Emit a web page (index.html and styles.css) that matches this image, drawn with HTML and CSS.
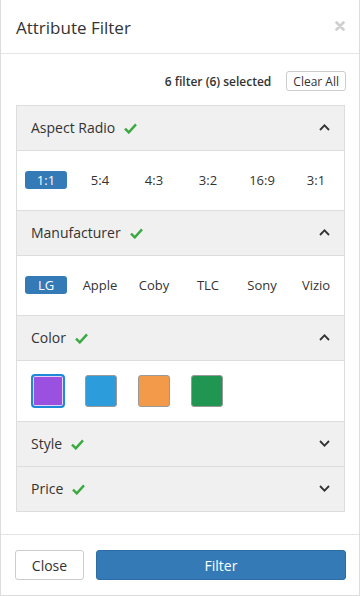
FILE: index.html
```html
<!DOCTYPE html>
<html lang="en">
<head>
    <meta charset="UTF-8">
    <meta name="viewport" content="width=device-width, initial-scale=1.0">
    <title>Attribute Filter</title>
    <link rel="stylesheet" href="styles.css">
</head>
<body>
    <div class="modal">
        <div class="modal-header">
            <h4 class="modal-title">Attribute Filter</h4>
            <button class="close" type="button" aria-label="Close">
                <svg width="10" height="10" viewBox="0 0 10 10"><path d="M1.5 1.5 L8.5 8.5 M8.5 1.5 L1.5 8.5" stroke="#cfcfcf" stroke-width="2.6" stroke-linecap="round"/></svg>
            </button>
        </div>

        <div class="modal-body">
            <div class="filter-summary">
                <strong>6 filter (6) selected</strong>
                <button class="btn-clear" type="button">Clear All</button>
            </div>

            <div class="panel-group">
                <!-- Aspect ratio -->
                <div class="panel">
                    <div class="panel-heading">
                        <span class="panel-title">Aspect Radio</span>
                        <svg class="check" width="13" height="11" viewBox="0 0 13 11"><path d="M1 5.6 L4.8 9.4 L12 1.4" fill="none" stroke="#3aaa40" stroke-width="2.4"/></svg>
                        <svg class="toggle" width="11" height="7" viewBox="0 0 11 7"><path d="M1 6 L5.5 1.4 L10 6" fill="none" stroke="#333" stroke-width="1.8"/></svg>
                    </div>
                    <div class="panel-body options">
                        <span class="option active">1:1</span>
                        <span class="option">5:4</span>
                        <span class="option">4:3</span>
                        <span class="option">3:2</span>
                        <span class="option">16:9</span>
                        <span class="option">3:1</span>
                    </div>
                </div>

                <!-- Manufacturer -->
                <div class="panel">
                    <div class="panel-heading">
                        <span class="panel-title">Manufacturer</span>
                        <svg class="check" width="13" height="11" viewBox="0 0 13 11"><path d="M1 5.6 L4.8 9.4 L12 1.4" fill="none" stroke="#3aaa40" stroke-width="2.4"/></svg>
                        <svg class="toggle" width="11" height="7" viewBox="0 0 11 7"><path d="M1 6 L5.5 1.4 L10 6" fill="none" stroke="#333" stroke-width="1.8"/></svg>
                    </div>
                    <div class="panel-body options">
                        <span class="option active">LG</span>
                        <span class="option">Apple</span>
                        <span class="option">Coby</span>
                        <span class="option">TLC</span>
                        <span class="option">Sony</span>
                        <span class="option">Vizio</span>
                    </div>
                </div>

                <!-- Color -->
                <div class="panel">
                    <div class="panel-heading">
                        <span class="panel-title">Color</span>
                        <svg class="check" width="13" height="11" viewBox="0 0 13 11"><path d="M1 5.6 L4.8 9.4 L12 1.4" fill="none" stroke="#3aaa40" stroke-width="2.4"/></svg>
                        <svg class="toggle" width="11" height="7" viewBox="0 0 11 7"><path d="M1 6 L5.5 1.4 L10 6" fill="none" stroke="#333" stroke-width="1.8"/></svg>
                    </div>
                    <div class="panel-body swatches">
                        <span class="swatch swatch-purple active"></span>
                        <span class="swatch swatch-blue"></span>
                        <span class="swatch swatch-orange"></span>
                        <span class="swatch swatch-green"></span>
                    </div>
                </div>

                <!-- Style -->
                <div class="panel">
                    <div class="panel-heading">
                        <span class="panel-title">Style</span>
                        <svg class="check" width="13" height="11" viewBox="0 0 13 11"><path d="M1 5.6 L4.8 9.4 L12 1.4" fill="none" stroke="#3aaa40" stroke-width="2.4"/></svg>
                        <svg class="toggle" width="11" height="7" viewBox="0 0 11 7"><path d="M1 1 L5.5 5.6 L10 1" fill="none" stroke="#333" stroke-width="1.8"/></svg>
                    </div>
                </div>

                <!-- Price -->
                <div class="panel">
                    <div class="panel-heading">
                        <span class="panel-title">Price</span>
                        <svg class="check" width="13" height="11" viewBox="0 0 13 11"><path d="M1 5.6 L4.8 9.4 L12 1.4" fill="none" stroke="#3aaa40" stroke-width="2.4"/></svg>
                        <svg class="toggle" width="11" height="7" viewBox="0 0 11 7"><path d="M1 1 L5.5 5.6 L10 1" fill="none" stroke="#333" stroke-width="1.8"/></svg>
                    </div>
                </div>
            </div>
        </div>

        <div class="modal-footer">
            <button class="btn btn-default" type="button">Close</button>
            <button class="btn btn-primary" type="button">Filter</button>
        </div>
    </div>
</body>
</html>
```

FILE: styles.css
```css
* {
    margin: 0;
    padding: 0;
    box-sizing: border-box;
}

body {
    font-family: 'Open Sans', 'Liberation Sans', sans-serif;
    color: #333;
    background: #fff;
}

button {
    font-family: inherit;
    cursor: pointer;
}

.modal {
    width: 360px;
    height: 596px;
    border: 1px solid #dcdcdc;
    border-top: none;
    display: flex;
    flex-direction: column;
}

/* header */
.modal-header {
    height: 54px;
    padding: 2px 14px 0 15px;
    border-bottom: 1px solid #e5e5e5;
    display: flex;
    align-items: center;
    justify-content: space-between;
}

.modal-title {
    font-size: 17px;
    font-weight: 400;
    color: #333;
}

.close {
    background: none;
    border: none;
    width: 10px;
    height: 10px;
    margin-top: -4px;
    display: flex;
}

/* body */
.modal-body {
    flex: 1;
    padding: 15px 14px 0 15px;
}

.filter-summary {
    height: 24px;
    margin-bottom: 12px;
    display: flex;
    align-items: center;
    justify-content: flex-end;
    gap: 15px;
    font-size: 12px;
}

.filter-summary strong {
    font-weight: 600;
}

.btn-clear {
    height: 20px;
    padding: 0 6px;
    font-size: 12px;
    color: #333;
    background: #fff;
    border: 1px solid #ccc;
    border-radius: 3px;
    margin-right: -1px;
}

.panel-group {
    border: 1px solid #ddd;
}

.panel + .panel {
    border-top: 1px solid #ddd;
}

.panel-heading {
    height: 44px;
    padding: 0 14px 1px 14px;
    background: #f0f0f0;
    display: flex;
    align-items: center;
}

.panel-title {
    font-size: 14px;
    color: #333;
}

.check {
    margin-left: 9px;
    margin-top: 1px;
}

.toggle {
    margin-left: auto;
}

.panel-body {
    border-top: 1px solid #ddd;
    background: #fff;
}

.options {
    display: grid;
    grid-template-columns: repeat(6, 54px);
    padding: 20px 0 21px 2px;
}

.option {
    height: 18px;
    line-height: 18px;
    margin: 0 6px;
    text-align: center;
    font-size: 13px;
    color: #333;
    border-radius: 3px;
}

.option.active {
    background: #337ab7;
    color: #fff;
}

.swatches {
    display: grid;
    grid-template-columns: repeat(4, 53px);
    justify-items: center;
    align-items: center;
    padding: 13px 0 13px 4px;
    height: 61px;
}

.swatch {
    width: 32px;
    height: 32px;
    border: 1px solid #999;
    border-radius: 3px;
}

.swatch.active {
    width: 34px;
    height: 34px;
    border: 2px solid #1c8ad8;
    box-shadow: inset 0 0 0 1px #e4d2f7;
    border-radius: 4px;
}

.swatch-purple { background: #9b51e0; }
.swatch-blue { background: #2d9cdb; }
.swatch-orange { background: #f2994a; }
.swatch-green { background: #219653; }

/* footer */
.modal-footer {
    height: 61px;
    padding: 15px 13px 15px 14px;
    border-top: 1px solid #e5e5e5;
    display: flex;
    align-items: flex-start;
    gap: 12px;
}

.btn {
    height: 30px;
    font-size: 14px;
    border-radius: 3px;
    border: 1px solid #ccc;
}

.btn-default {
    width: 69px;
    background: #fff;
    color: #333;
}

.btn-primary {
    flex: 1;
    background: #337ab7;
    border-color: #2e6da4;
    color: #fff;
}
```
